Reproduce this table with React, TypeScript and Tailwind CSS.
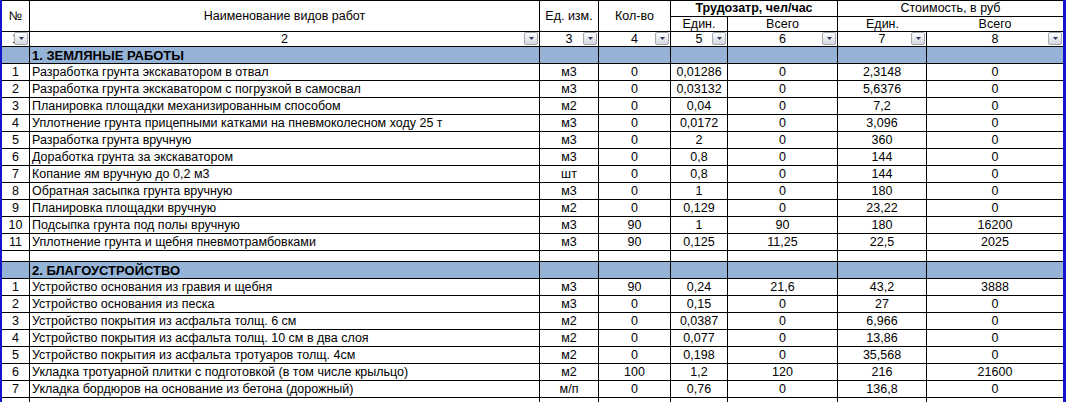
import React from "react";

type Row = [string, string, string, string, string, string, string, string];

const sec1: Row[] = [
  ["1", "Разработка грунта экскаватором в отвал", "м3", "0", "0,01286", "0", "2,3148", "0"],
  ["2", "Разработка грунта экскаватором с погрузкой в самосвал", "м3", "0", "0,03132", "0", "5,6376", "0"],
  ["3", "Планировка площадки механизированным способом", "м2", "0", "0,04", "0", "7,2", "0"],
  ["4", "Уплотнение грунта прицепными катками на пневмоколесном ходу 25 т", "м3", "0", "0,0172", "0", "3,096", "0"],
  ["5", "Разработка грунта вручную", "м3", "0", "2", "0", "360", "0"],
  ["6", "Доработка грунта за экскаватором", "м3", "0", "0,8", "0", "144", "0"],
  ["7", "Копание ям вручную до 0,2 м3", "шт", "0", "0,8", "0", "144", "0"],
  ["8", "Обратная засыпка грунта вручную", "м3", "0", "1", "0", "180", "0"],
  ["9", "Планировка площадки вручную", "м2", "0", "0,129", "0", "23,22", "0"],
  ["10", "Подсыпка грунта под полы вручную", "м3", "90", "1", "90", "180", "16200"],
  ["11", "Уплотнение грунта и щебня пневмотрамбовками", "м3", "90", "0,125", "11,25", "22,5", "2025"],
];

const sec2: Row[] = [
  ["1", "Устройство основания из гравия и щебня", "м3", "90", "0,24", "21,6", "43,2", "3888"],
  ["2", "Устройство основания из песка", "м3", "0", "0,15", "0", "27", "0"],
  ["3", "Устройство покрытия из асфальта толщ. 6 см", "м2", "0", "0,0387", "0", "6,966", "0"],
  ["4", "Устройство покрытия из асфальта толщ. 10 см в два слоя", "м2", "0", "0,077", "0", "13,86", "0"],
  ["5", "Устройство покрытия из асфальта тротуаров толщ. 4см", "м2", "0", "0,198", "0", "35,568", "0"],
  ["6", "Укладка тротуарной плитки с подготовкой (в том числе крыльцо)", "м2", "100", "1,2", "120", "216", "21600"],
  ["7", "Укладка бордюров на основание из бетона (дорожный)", "м/п", "0", "0,76", "0", "136,8", "0"],
];

function Filter() {
  return (
    <div className="absolute right-[1px] top-0 w-[14px] h-[13px] border border-[#a3a8b1] rounded-[2px] bg-linear-to-b from-white to-[#d2d6dc] flex items-center justify-center">
      <svg width="5" height="3" viewBox="0 0 5 3">
        <path d="M0 0H5L2.5 3Z" fill="#2f3d5c" />
      </svg>
    </div>
  );
}

const cellBase = "border-b border-black flex items-center overflow-hidden whitespace-nowrap";

function DataRow({ r }: { r: Row }) {
  return (
    <>
      {r.map((v, i) => (
        <div
          key={i}
          className={
            cellBase +
            " h-[17px] " +
            (i === 7 ? "" : "border-r ") +
            (i === 1 ? "justify-start pl-[2px]" : "justify-center")
          }
        >
          {v}
        </div>
      ))}
    </>
  );
}

function SectionRow({ title }: { title: string }) {
  return (
    <>
      {Array.from({ length: 8 }).map((_, i) => (
        <div
          key={i}
          className={
            cellBase +
            " h-[17px] bg-[#95b3d7] font-bold text-[13px] " +
            (i === 7 ? "" : "border-r ") +
            (i === 1 ? "justify-start pl-[2px]" : "justify-center")
          }
        >
          {i === 1 ? title : ""}
        </div>
      ))}
    </>
  );
}

function SpacerRow({ h }: { h: string }) {
  return (
    <>
      {Array.from({ length: 8 }).map((_, i) => (
        <div key={i} className={cellBase + " " + h + " " + (i === 7 ? "" : "border-r")} />
      ))}
    </>
  );
}

export default function App() {
  return (
    <div className="w-[1066px] h-[402px] overflow-hidden bg-white flex font-['Liberation_Sans',Arial,sans-serif] text-[12.5px] leading-none text-black">
      <div className="w-[2px] bg-[#1414c8] shrink-0" />
      <div className="flex-1 border-t border-black grid grid-cols-[28px_510px_59px_72px_57px_110px_89px_136px] content-start">
        <div className={cellBase + " border-r row-span-2 justify-center"}>№</div>
        <div className={cellBase + " border-r row-span-2 justify-center"}>Наименование видов работ</div>
        <div className={cellBase + " border-r row-span-2 justify-center"}>Ед. изм.</div>
        <div className={cellBase + " border-r row-span-2 justify-center"}>Кол-во</div>
        <div className={cellBase + " border-r col-span-2 h-[16px] justify-center font-bold"}>Трудозатр, чел/час</div>
        <div className={cellBase + " col-span-2 h-[16px] justify-center"}>Стоимость, в руб</div>
        <div className={cellBase + " border-r h-[15px] justify-center"}>Един.</div>
        <div className={cellBase + " border-r h-[15px] justify-center"}>Всего</div>
        <div className={cellBase + " h-[15px] justify-center"}>Един.</div>
        <div className={cellBase + " h-[15px] justify-center"}>Всего</div>
        {["1", "2", "3", "4", "5", "6", "7", "8"].map((n, i) => (
          <div
            key={n}
            className={cellBase + " relative h-[15px] justify-center " + (i === 7 ? "" : "border-r")}
          >
            <span>{n}</span>
            <Filter />
          </div>
        ))}
        <SectionRow title="1. ЗЕМЛЯНЫЕ РАБОТЫ" />
        {sec1.map((r) => (
          <DataRow key={"a" + r[0]} r={r} />
        ))}
        <SpacerRow h="h-[11px]" />
        <SectionRow title="2. БЛАГОУСТРОЙСТВО" />
        {sec2.map((r) => (
          <DataRow key={"b" + r[0]} r={r} />
        ))}
        <SpacerRow h="h-[17px]" />
      </div>
      <div className="w-[3px] bg-[#1414c8] shrink-0" />
    </div>
  );
}
